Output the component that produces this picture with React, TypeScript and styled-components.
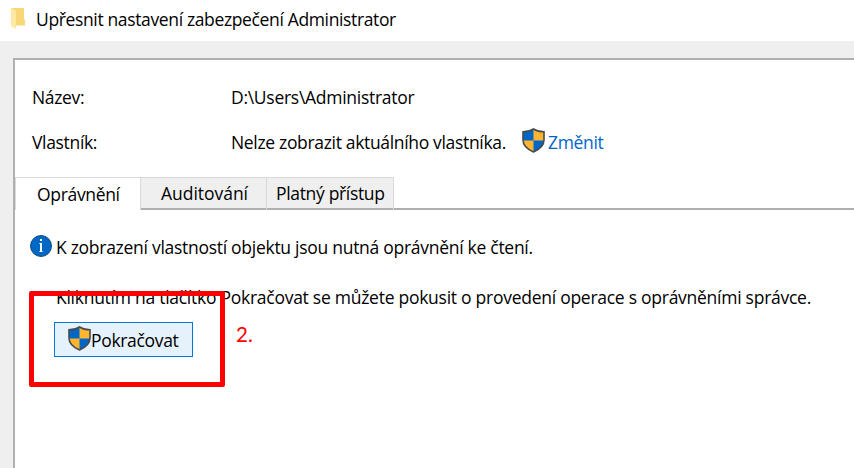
import React from "react";
import styled, { createGlobalStyle } from "styled-components";

const Global = createGlobalStyle`
  * { box-sizing: border-box; }
  body { margin: 0; background: #fff; overflow: hidden; }
`;

const Window = styled.div`
  width: 854px;
  height: 468px;
  display: flex;
  flex-direction: column;
  background: #efefef;
  color: #000;
  font-family: "Open Sans", "Noto Sans", sans-serif;
  font-size: 17.5px;
  line-height: 24px;
  white-space: nowrap;
  overflow: hidden;
`;

const TitleBar = styled.header`
  height: 41px;
  flex: none;
  display: flex;
  align-items: flex-start;
  padding: 7px 0 0 11px;
  background: #fff;
`;

const FolderSvg = styled.svg`
  width: 15px;
  height: 22px;
  margin-right: 10px;
  flex: none;
`;

const Label = styled.span<{ $spacing?: number }>`
  letter-spacing: ${(p) => p.$spacing ?? -0.33}px;
`;

const Panel = styled.main`
  flex: 1;
  min-height: 0;
  margin: 17px 0 0 13px;
  border: solid #b0b0b0;
  border-width: 2px 0 0 2px;
  background: #fff;
`;

const Details = styled.section`
  display: grid;
  grid-template-columns: 199px auto;
  grid-auto-rows: 24px;
  align-content: start;
  row-gap: 21px;
  padding: 25px 0 0 17px;
  height: 117px;
`;

const OwnerValue = styled.div`
  display: flex;
  height: 24px;
`;

const ShieldSvg = styled.svg`
  width: 23px;
  height: 25px;
  flex: none;
  margin-top: -2px;
`;

const ChangeLink = styled.a`
  display: flex;
  margin-left: 16px;
  color: #0066cc;
  gap: 3px;
`;

const TabStrip = styled.nav`
  display: flex;
  height: 33px;
`;

const Tab = styled.div<{ $width: number; $inset: number; $active?: boolean }>`
  width: ${(p) => p.$width}px;
  padding: ${(p) => (p.$active ? 4 : 3)}px 0 0 ${(p) => p.$inset}px;
  background: ${(p) => (p.$active ? "#fff" : "#efefef")};
  border: solid #d9d9d9;
  border-width: 1px 0 0 1px;
  box-shadow: ${(p) => (p.$active ? "none" : "inset 0 -2px #b0b0b0")};
`;

const TabRest = styled.div`
  flex: 1;
  border-left: 1px solid #d9d9d9;
  box-shadow: inset 0 -2px #b0b0b0;
`;

const Content = styled.section`
  display: flex;
  flex-direction: column;
  align-items: flex-start;
  padding: 25px 0 0 15px;
`;

const InfoRow = styled.div`
  display: flex;
  height: 24px;
  gap: 4px;
`;

const InfoSvg = styled.svg`
  width: 22px;
  height: 22px;
  flex: none;
`;

const Hint = styled.p`
  margin: 26px 0 0 26px;
`;

const ActionRow = styled.div`
  display: flex;
  margin: 13px 0 0 24px;
`;

const ContinueButton = styled.button`
  width: 139px;
  height: 35px;
  display: flex;
  align-items: flex-start;
  padding: 5px 0 0 13px;
  border: 1px solid #0078d7;
  background: #e5f1fb;
  color: #000;
  font: inherit;
`;

const StepNumber = styled.span`
  margin: 0 0 0 43px;
  color: #f00;
  font-family: Lato, sans-serif;
  font-size: 20.5px;
`;

const Highlight = styled.div`
  position: absolute;
  left: 29px;
  top: 291px;
  width: 196px;
  height: 96px;
  border: 5px solid #f00;
  border-radius: 2px;
`;

const SHIELD = "M11.5 1C8.5 3 5 3.8 1 3.8V12c0 5.7 4.8 9.5 10.5 12C17.2 21.5 22 17.7 22 12V3.8C18 3.8 14.5 3 11.5 1Z";

const Shield = () => (
  <ShieldSvg viewBox="0 0 23 25">
    <path d={SHIELD} fill="#ffb62e" />
    <path d="M11.5 1C8.5 3 5 3.8 1 3.8V12.5H11.5ZM11.5 12.5V24C17.2 21.5 22 17.7 22 12.5Z" fill="#0066c8" />
    <path d={SHIELD} fill="none" stroke="#484c50" strokeWidth="1.6" />
  </ShieldSvg>
);

const Folder = () => (
  <FolderSvg viewBox="0 0 15 22">
    <path d="M0 1H13V12L14 13V18.5H0Z" fill="#f7d778" />
    <path d="M0 1L5 3.5V22L0 19Z" fill="#ffe9a2" />
  </FolderSvg>
);

export default function App() {
  return (
    <>
      <Global />
      <Window>
        <TitleBar>
          <Folder />
          <Label $spacing={-0.36}>Upřesnit nastavení zabezpečení Administrator</Label>
        </TitleBar>
        <Panel>
          <Details>
            <Label>Název:</Label>
            <Label $spacing={-0.28}>D:\Users\Administrator</Label>
            <Label>Vlastník:</Label>
            <OwnerValue>
              <Label>Nelze zobrazit aktuálního vlastníka.</Label>
              <ChangeLink>
                <Shield />
                <Label>Změnit</Label>
              </ChangeLink>
            </OwnerValue>
          </Details>
          <TabStrip>
            <Tab $active $width={125} $inset={21}><Label>Oprávnění</Label></Tab>
            <Tab $width={126} $inset={20}><Label $spacing={-0.03}>Auditování</Label></Tab>
            <Tab $width={127} $inset={9}><Label>Platný přístup</Label></Tab>
            <TabRest />
          </TabStrip>
          <Content>
            <InfoRow>
              <InfoSvg viewBox="0 0 22 22">
                <circle cx="11" cy="11" r="10.5" fill="#0067c5" stroke="#174e80" />
                <path d="M10 4h2v2h-2zM10 8h2v9h-2z" fill="#fff" />
                <path d="M9 8h1v1h-1zM9 16h4v1h-4z" fill="#fff" fillOpacity="0.6" />
              </InfoSvg>
              <Label $spacing={-0.28}>K zobrazení vlastností objektu jsou nutná oprávnění ke čtení.</Label>
            </InfoRow>
            <Hint>
              <Label $spacing={-0.265}>Kliknutím na tlačítko Pokračovat se můžete pokusit o provedení operace s oprávněními správce.</Label>
            </Hint>
            <ActionRow>
              <ContinueButton>
                <Shield />
                <Label>Pokračovat</Label>
              </ContinueButton>
              <StepNumber>2.</StepNumber>
            </ActionRow>
          </Content>
        </Panel>
        <Highlight />
      </Window>
    </>
  );
}
